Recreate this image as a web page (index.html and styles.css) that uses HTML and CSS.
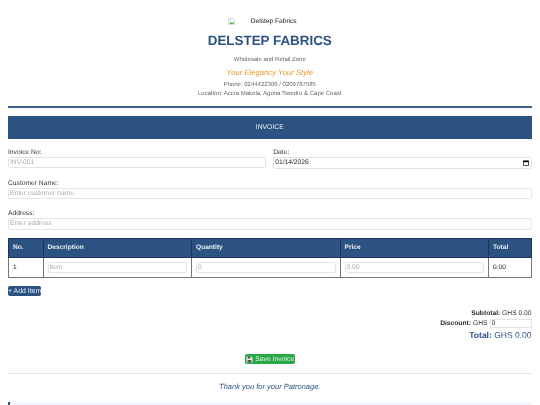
FILE: index.html
```html
<!DOCTYPE html>
<html lang="en">
<head>
<meta charset="utf-8">
<title>Invoice</title>
<link rel="stylesheet" href="styles.css">
</head>
<body>
<div class="page">
  <header class="head">
    <div class="logo">
      <svg class="broken" viewBox="0 0 8 8" width="7" height="7"><path d="M.5.5h5l2 2v5h-7z" fill="#fff" stroke="#b5b5b5" stroke-width=".6"/><path d="M1.2 6.8l2-2.4 1.5 1.4 1.8-1.6v2.6z" fill="#6fae5c"/><circle cx="2.4" cy="2.4" r=".8" fill="#8db8e8"/></svg>
      <span>Delstep Fabrics</span>
    </div>
    <h1>DELSTEP FABRICS</h1>
    <p class="sub">Wholesale and Retail Zone</p>
    <p class="slogan">Your Elegancy Your Style</p>
    <p class="contact">Phone: 0244422306 / 0209787585</p>
    <p class="contact">Location: Accra Makola, Agona Swedru &amp; Cape Coast</p>
  </header>
  <div class="banner">INVOICE</div>
  <div class="two">
    <div class="field"><label>Invoice No:</label><input type="text" placeholder="INV-001"></div>
    <div class="field"><label>Date:</label>
      <div class="datebox"><span>01/14/2026</span>
        <svg viewBox="0 0 8 8" width="6" height="6"><path d="M.5 1.2h7v6.3h-7z" fill="none" stroke="#000" stroke-width="1"/><path d="M.5 1h7v2h-7z" fill="#000"/></svg>
      </div>
    </div>
  </div>
  <div class="field"><label>Customer Name:</label><input type="text" placeholder="Enter customer name"></div>
  <div class="field"><label>Address:</label><input type="text" placeholder="Enter address"></div>
  <table>
    <thead><tr><th class="c1">No.</th><th class="c2">Description</th><th class="c3">Quantity</th><th class="c4">Price</th><th>Total</th></tr></thead>
    <tbody><tr><td>1</td><td><input type="text" placeholder="Item"></td><td><input type="text" placeholder="0"></td><td><input type="text" placeholder="0.00"></td><td>0.00</td></tr></tbody>
  </table>
  <button class="add" type="button">+ Add Item</button>
  <div class="totals">
    <div><b>Subtotal:</b> GHS 0.00</div>
    <div class="disc"><b>Discount:</b> GHS <input type="text" value="0"></div>
    <div class="grand"><b>Total:</b> GHS 0.00</div>
  </div>
  <div class="save-wrap"><button class="save" type="button"><svg viewBox="0 0 8 8" width="7" height="7"><path d="M.5.5h5.5l1.5 1.5v5.5h-7z" fill="#e8e8e8"/><path d="M2 .5h3v2.4h-3z" fill="#444"/><path d="M1.8 4.6h4.4v2.9h-4.4z" fill="#555"/></svg>Save Invoice</button></div>
  <footer class="thanks">Thank you for your Patronage.</footer>
  <div class="strip"></div>
</div>
</body>
</html>
```
FILE: styles.css
```css
* { box-sizing: border-box; }
html, body { margin: 0; height: 405px; overflow: hidden; background: #fff; }
body { font-family: "Liberation Sans", Arial, sans-serif; color: #333; font-size: 6.7px; text-rendering: geometricPrecision; }
.page { padding: 17px 8.5px 0 8px; will-change: transform; }
.head { text-align: center; border-bottom: 2px solid #3f6390; height: 90.5px; }
.logo { display: flex; justify-content: center; align-items: center; gap: 16px; height: 9px; font-size: 6.6px; color: #222; padding-right: 15px; }
.broken { display: block; }
h1 { margin: 6px 0 0; font-size: 13.4px; line-height: 18px; color: #2c5282; }
p { margin: 0; }
.sub { font-size: 6px; line-height: 7px; margin-top: 7px; color: #666; }
.slogan { font-size: 7.7px; line-height: 10px; margin-top: 4px; font-style: italic; color: #ed9a2d; }
.contact { font-size: 6px; line-height: 9px; color: #666; }
.slogan + .contact { margin-top: 3px; }
.banner { margin-top: 8.5px; height: 22.5px; background: #2c5282; color: #e8eef5; font-size: 6.8px; line-height: 23.5px; text-align: center; }
.two { display: grid; grid-template-columns: 1fr 1fr; gap: 7px; margin-top: 9px; }
.field + .field, .two + .field { margin-top: 10px; }
.two .field + .field { margin-top: 0; }
label { display: block; font-size: 6.7px; line-height: 9px; color: #333; }
input { display: block; width: 100%; height: 11.5px; padding: 0 1px; border: .75px solid #e4e4e4; border-radius: 2px; font: 6.7px "Liberation Sans", Arial, sans-serif; color: #333; background: #fff; outline: none; text-rendering: geometricPrecision; }
input::placeholder { color: #aaa; opacity: 1; }
.datebox { display: flex; justify-content: space-between; align-items: center; height: 12px; padding: 0 1.5px 0 1px; border: .75px solid #e4e4e4; border-radius: 2px; font-size: 6.7px; color: #222; }
.datebox svg { display: block; }
table { width: 100%; table-layout: fixed; border-collapse: collapse; margin-top: 8px; }
th, td { padding: 0 4px; border: .75px solid #777; font-size: 6.6px; text-align: left; }
th { height: 19.5px; background: #2c5282; color: #e8eef5; border-color: #1c3557; }
td { height: 19.5px; color: #222; }
.c1 { width: 34.5px; }
.c2, .c3, .c4 { width: 148.5px; }
td input { height: 10.5px; }
.add { display: block; margin: 8px 0 0; padding: 1px 0 0; width: 33px; height: 10px; border: 0; border-radius: 2px; background: #2c5282; color: #e8eef5; font: 6.9px "Liberation Sans", Arial, sans-serif; white-space: nowrap; overflow: hidden; text-rendering: geometricPrecision; }
.totals { margin-top: 13px; text-align: right; font-size: 6.7px; color: #333; }
.totals b { color: #222; }
.totals > div { line-height: 9px; }
.disc { display: flex; justify-content: flex-end; align-items: center; gap: 2px; height: 9.5px; margin-top: 1px; }
.disc input { width: 42px; height: 8.5px; border-radius: 0; }
.totals .grand { font-size: 8.5px; line-height: 12px; margin-top: 1px; color: #2c5282; }
.grand b { color: #2c5282; }
.save-wrap { display: flex; justify-content: center; margin-top: 13px; }
.save { display: flex; align-items: center; gap: 2px; height: 10px; width: 50px; padding: 0 0 0 1.5px; border: 0; border-radius: 2px; background: #28a745; color: #e8f5ec; font: 6.8px "Liberation Sans", Arial, sans-serif; white-space: nowrap; overflow: hidden; text-rendering: geometricPrecision; }
.thanks { margin-top: 9px; padding-top: 7px; height: 28px; border-top: 1px solid #e5e5e5; text-align: center; font-size: 7.5px; line-height: 12px; font-style: italic; color: #2c5282; }
.strip { height: 10px; margin-top: 1px; background: #f1f7fe; border-left: 2px solid #2c5282; }
```
